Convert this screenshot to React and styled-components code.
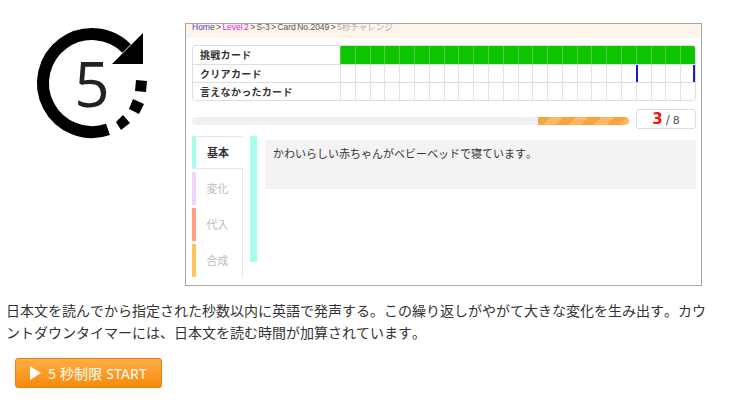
import React from 'react'
import styled, { createGlobalStyle } from 'styled-components'

const GlobalStyle = createGlobalStyle`
  html, body { margin: 0; padding: 0; background: #fff; }
  body {
    font-family: "Noto Sans CJK JP", "Noto Sans", sans-serif;
    color: #333;
    text-spacing-trim: space-all;
    font-kerning: none;
  }
`

const cells = Array.from({ length: 24 })
const tabs = [
  { label: '基本', color: '#a8ffe8', active: true },
  { label: '変化', color: '#eed4ff' },
  { label: '代入', color: '#ff9f80' },
  { label: '合成', color: '#ffc45c' },
]

const TimerIcon = () => (
  <Icon width="110" height="110" viewBox="0 0 110 110">
    <path d="M71 101.4 A49 49 0 1 1 89.6 20.4" fill="none" stroke="#000" strokeWidth="12" />
    <polygon points="106,5 106,36 75,36" fill="#000" />
    <polygon points="99,52 110,53 109,64 98,63" fill="#000" />
    <polygon points="96,71 107,76 102,86 92,81" fill="#000" />
    <polygon points="86,87 93,95 84,102 79,94" fill="#000" />
    <text x="55" y="79" textAnchor="middle" fontFamily="'Open Sans', sans-serif" fontSize="62" fill="#222">5</text>
  </Icon>
)

const App = () => {
  return (
    <>
      <GlobalStyle />
      <Page>
        <Top>
          <TimerIcon />
          <Frame>
            <Crumbs>
              <Home>Home</Home> &gt; <Level>Level 2</Level> &gt; S-3 &gt; Card No.2049 &gt; <Here>5秒チャレンジ</Here>
            </Crumbs>
            <Inner>
              <Table>
                <Row>
                  <RowLabel>挑戦カード</RowLabel>
                  {cells.map((_, i) => <Cell key={i} $green />)}
                </Row>
                <Row>
                  <RowLabel>クリアカード</RowLabel>
                  {cells.map((_, i) => <Cell key={i} $blue={i === 20} $blueEnd={i === 23} />)}
                </Row>
                <Row>
                  <RowLabel>言えなかったカード</RowLabel>
                  {cells.map((_, i) => <Cell key={i} />)}
                </Row>
              </Table>
              <ProgressRow>
                <Track><Fill /></Track>
                <Counter><b>3</b><Slash>/</Slash>8</Counter>
              </ProgressRow>
              <Body>
                <Tabs>
                  {tabs.map((t) => (
                    <Tab key={t.label} $color={t.color} $active={t.active}>{t.label}</Tab>
                  ))}
                </Tabs>
                <SideBar />
                <Sentence>かわいらしい赤ちゃんがベビーベッドで寝ています。</Sentence>
              </Body>
            </Inner>
          </Frame>
        </Top>
        <Intro>
          日本文を読んでから指定された秒数以内に英語で発声する。この繰り返しがやがて大きな変化を生み出す。カウントダウンタイマーには、日本文を読む時間が加算されています。
        </Intro>
        <StartButton>
          <Play />5 秒制限 START
        </StartButton>
      </Page>
    </>
  )
}

const Page = styled.div`
  width: 730px;
  height: 403px;
  overflow: hidden;
  box-sizing: border-box;
  padding: 23px 0 0 0;
`

const Top = styled.div`
  display: flex;
  align-items: flex-start;
`

const Icon = styled.svg`
  flex: none;
  margin: 5px 38px 0 37px;
  overflow: visible;
`

const Frame = styled.div`
  width: 515px;
  height: 261px;
  border: 1px solid #a6a6a6;
  overflow: hidden;
  flex: none;
`

const Crumbs = styled.div`
  height: 14px;
  background: #fff4ea;
  padding-left: 6px;
  font-size: 8.5px;
  line-height: 7px;
  word-spacing: -1px;
  color: #555;
  white-space: nowrap;
  font-family: "Liberation Sans", "Noto Sans CJK JP", sans-serif;
`

const Home = styled.span`color: #4a3fb0;`
const Level = styled.span`color: #e020e0;`
const Here = styled.span`color: #aaa;`

const Inner = styled.div`
  padding: 7px 5px 0 6px;
`

const Table = styled.div`
  border: 1px solid #ddd;
  border-radius: 3px;
  overflow: hidden;
  width: 502px;
`

const Row = styled.div`
  box-sizing: border-box;
  display: grid;
  grid-template-columns: 147px repeat(24, 1fr);
  height: 18px;
  & + & { border-top: 1px solid #ddd; }
`

const RowLabel = styled.div`
  font-size: 10px;
  font-weight: 700;
  line-height: 17px;
  padding-left: 7px;
  color: #333;
  white-space: nowrap;
  letter-spacing: 0.3px;
`

const Cell = styled.div`
  box-sizing: border-box;
  border-left: 1px solid ${(p) => (p.$blue ? '#1a1ac8' : p.$green ? '#55cc44' : '#e2e2e2')};
  background: ${(p) => (p.$green ? '#0dc400' : '#fff')};
  ${(p) => p.$blue && 'border-left-width: 2px;'}
  ${(p) => p.$blueEnd && 'border-right: 2px solid #1a1ac8;'}
`

const ProgressRow = styled.div`
  display: flex;
  align-items: flex-start;
  justify-content: space-between;
  width: 504px;
  margin-top: 8px;
`

const Track = styled.div`
  width: 437px;
  height: 8px;
  margin-top: 8px;
  border-radius: 4px;
  background: #f1f1f1;
  overflow: hidden;
  display: flex;
  justify-content: flex-end;
`

const Fill = styled.div`
  width: 91px;
  height: 100%;
  border-radius: 0 4px 4px 0;
  background: repeating-linear-gradient(135deg, #f9a53f 0 9px, #fbb966 9px 18px);
`

const Counter = styled.div`
  box-sizing: border-box;
  width: 60px;
  height: 20px;
  border: 1px solid #ddd;
  border-radius: 3px;
  text-align: center;
  font-family: "DejaVu Sans", sans-serif;
  font-size: 11px;
  line-height: 18px;
  color: #555;
  b { color: #f01010; font-size: 15px; }
`

const Slash = styled.span`
  margin: 0 3px;
  font-size: 12px;
`

const Body = styled.div`
  display: flex;
  align-items: flex-start;
  margin-top: 7px;
`

const Tabs = styled.div`
  width: 51px;
  flex: none;
  display: flex;
  flex-direction: column;
  gap: 3px;
  box-sizing: border-box;
  height: 142px;
  border-right: 1px solid #e6e6e6;
`

const Tab = styled.div`
  box-sizing: border-box;
  height: 33px;
  flex: none;
  border-left: 4px solid ${(p) => p.$color};
  font-size: 11px;
  font-weight: ${(p) => (p.$active ? 700 : 400)};
  color: ${(p) => (p.$active ? '#333' : '#bbb')};
  text-align: center;
  line-height: 32px;
  padding-right: 3px;
  background: #fff;
  ${(p) => p.$active && `
    border-top: 1px solid #e6e6e6;
    border-bottom: 1px solid #e6e6e6;
    margin-right: -1px;
    line-height: 31px;
  `}
`

const SideBar = styled.div`
  width: 7px;
  height: 126px;
  background: #a8ffe8;
  margin-left: 7px;
  flex: none;
`

const Sentence = styled.div`
  box-sizing: border-box;
  width: 431px;
  height: 49px;
  margin: 4px 0 0 8px;
  padding: 1px 8px;
  background: #f3f3f3;
  font-size: 11px;
  line-height: 24px;
  color: #333;
  white-space: nowrap;
`

const Intro = styled.p`
  margin: 13px 0 0 6px;
  width: 712px;
  font-size: 14px;
  line-height: 22px;
  color: #333;
`

const StartButton = styled.button`
  display: flex;
  align-items: center;
  box-sizing: border-box;
  width: 147px;
  height: 30px;
  margin: 15px 0 0 15px;
  padding: 0 0 0 14px;
  border: 1px solid #e08412;
  border-radius: 3px;
  background: linear-gradient(#ffad45, #f68a0a);
  color: #fff;
  font-family: "Noto Sans", "Noto Sans CJK JP", sans-serif;
  font-size: 14px;
  letter-spacing: 0.15px;
  white-space: nowrap;
`

const Play = styled.span`
  width: 0;
  height: 0;
  border-style: solid;
  border-width: 7px 0 7px 11px;
  border-color: transparent transparent transparent #fff;
  margin-right: 7px;
`

export default App
